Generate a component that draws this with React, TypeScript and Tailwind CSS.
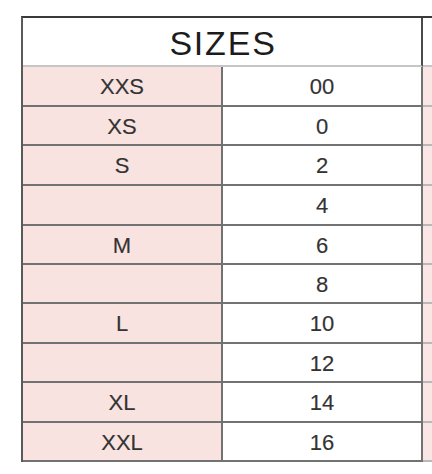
import React from "react";

const rows: { size: string; num: string; h: string }[] = [
  { size: "XXS", num: "00", h: "h-[40px]" },
  { size: "XS", num: "0", h: "h-[39px]" },
  { size: "S", num: "2", h: "h-[40px]" },
  { size: "", num: "4", h: "h-[40px]" },
  { size: "M", num: "6", h: "h-[39px]" },
  { size: "", num: "8", h: "h-[39px]" },
  { size: "L", num: "10", h: "h-[40px]" },
  { size: "", num: "12", h: "h-[39px]" },
  { size: "XL", num: "14", h: "h-[40px]" },
  { size: "XXL", num: "16", h: "h-[39px]" },
];

export default function App() {
  return (
    <div className="w-[432px] h-[474px] overflow-hidden bg-white pl-[21px] pt-[16px] font-['Liberation_Sans',Arial,sans-serif]">
      <div className="grid w-[620px] grid-cols-[200px_200px_200px] border-l-2 border-t-2 border-l-[#5a5a5a] border-t-[#3a3a3a]">
        <div className="col-span-2 h-[49px] flex items-center justify-center border-r-2 border-b-2 border-r-[#4a4a4a] border-b-[#c6c6c6] bg-white text-[34px] tracking-[1.8px] text-[#1c1c1c] leading-none pl-[2px] pt-[3px]">
          SIZES
        </div>
        <div className="h-[49px] border-b-2 border-b-[#c6c6c6] bg-white" />
        {rows.map((r, i) => (
          <React.Fragment key={i}>
            <div
              className={`${r.h} flex items-center justify-center border-r-2 border-b-2 border-[#727272] bg-[#f9e3e1] text-[22px] text-[#333333] leading-none pt-[2px] [-webkit-text-stroke:0.15px_#333333]`}
            >
              {r.size}
            </div>
            <div
              className={`${r.h} flex items-center justify-center border-r-2 border-b-2 border-[#727272] bg-white text-[22px] text-[#333333] leading-none pt-[2px] [-webkit-text-stroke:0.15px_#333333]`}
            >
              {r.num}
            </div>
            <div className={`${r.h} border-b-2 border-[#b9b9b9] bg-[#fae6e4]`} />
          </React.Fragment>
        ))}
      </div>
    </div>
  );
}
